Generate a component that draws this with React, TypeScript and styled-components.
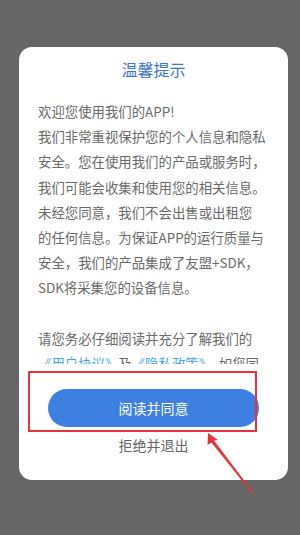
import React from "react";
import styled, { createGlobalStyle } from "styled-components";

const Global = createGlobalStyle`
  html, body { margin: 0; padding: 0; }
  body {
    background: #666666;
    font-family: "Noto Sans CJK SC", "Noto Sans", sans-serif;
  }
`;

const Screen = styled.div`
  position: relative;
  width: 300px;
  height: 535px;
  background: #666666;
  padding: 47px 12px 0 19px;
  box-sizing: border-box;
  overflow: hidden;
`;

const Card = styled.div`
  position: relative;
  width: 269px;
  height: 433px;
  background: #ffffff;
  border-radius: 13px;
  display: flex;
  flex-direction: column;
  align-items: center;
  box-sizing: border-box;
  padding: 10px 0 0;
`;

const Title = styled.div`
  font-size: 16px;
  line-height: 24px;
  color: #3a76cc;
`;

const Body = styled.div`
  align-self: stretch;
  margin-top: 18px;
  height: 265px;
  overflow: hidden;
  padding: 0 10px 0 19px;
  font-size: 13.4px;
  line-height: 25.2px;
  color: #6a6a6a;
`;

const Line = styled.div`
  white-space: nowrap;
  min-height: 25.2px;
`;

const Link = styled.span`
  color: #4aa6e6;
`;

const PrimaryButton = styled.button`
  margin-top: 25px;
  width: 211px;
  height: 38px;
  border: none;
  border-radius: 19px;
  background: #3e7fe2;
  color: #ffffff;
  font-family: inherit;
  font-size: 14px;
  line-height: 38px;
  padding: 0;
`;

const TextButton = styled.div`
  margin-top: 8px;
  font-size: 14px;
  line-height: 20px;
  color: #666666;
`;

const Highlight = styled.div`
  position: absolute;
  left: 9px;
  top: 324px;
  width: 229px;
  height: 61px;
  border: 2px solid #e8333c;
  box-sizing: border-box;
  pointer-events: none;
`;

const ArrowSvg = styled.svg`
  position: absolute;
  left: 0;
  top: 0;
  pointer-events: none;
`;

export default function App() {
  return (
    <>
      <Global />
      <Screen>
        <Card>
          <Title>温馨提示</Title>
          <Body>
            <Line>欢迎您使用我们的APP!</Line>
            <Line>我们非常重视保护您的个人信息和隐私</Line>
            <Line>安全。您在使用我们的产品或服务时，</Line>
            <Line>我们可能会收集和使用您的相关信息。</Line>
            <Line>未经您同意，我们不会出售或出租您</Line>
            <Line>的任何信息。为保证APP的运行质量与</Line>
            <Line>安全，我们的产品集成了友盟+SDK，</Line>
            <Line>SDK将采集您的设备信息。</Line>
            <Line />
            <Line>请您务必仔细阅读并充分了解我们的</Line>
            <Line>
              <Link>《用户协议》</Link>及<Link>《隐私政策》</Link>，如您同
            </Line>
          </Body>
          <PrimaryButton>阅读并同意</PrimaryButton>
          <TextButton>拒绝并退出</TextButton>
          <Highlight />
        </Card>
        <ArrowSvg width="300" height="535" viewBox="0 0 300 535">
          <polygon
            points="208,433 207.5,445 211.5,442.5 252.5,494 254,493.5 214,440.5 218,440"
            fill="#e8333c"
          />
        </ArrowSvg>
      </Screen>
    </>
  );
}
